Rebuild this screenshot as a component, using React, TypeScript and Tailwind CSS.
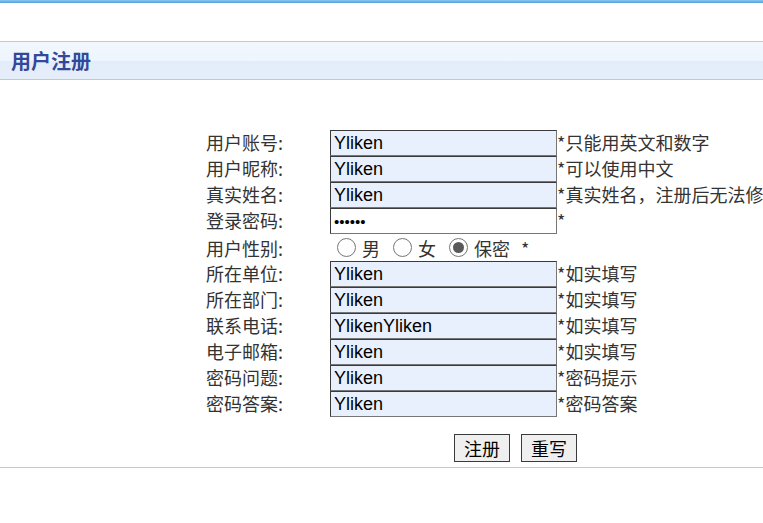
import React from "react";

const cjk = '"Noto Sans CJK SC", "Liberation Serif", serif';

const rows: { label: string; value: string; hint: string; password?: boolean }[] = [
  { label: "用户账号:", value: "Yliken", hint: "*只能用英文和数字" },
  { label: "用户昵称:", value: "Yliken", hint: "*可以使用中文" },
  { label: "真实姓名:", value: "Yliken", hint: "*真实姓名，注册后无法修" },
  { label: "登录密码:", value: "123456", hint: "*", password: true },
];

const rows2: { label: string; value: string; hint: string }[] = [
  { label: "所在单位:", value: "Yliken", hint: "*如实填写" },
  { label: "所在部门:", value: "Yliken", hint: "*如实填写" },
  { label: "联系电话:", value: "YlikenYliken", hint: "*如实填写" },
  { label: "电子邮箱:", value: "Yliken", hint: "*如实填写" },
  { label: "密码问题:", value: "Yliken", hint: "*密码提示" },
  { label: "密码答案:", value: "Yliken", hint: "*密码答案" },
];

function Row({ label, value, hint, password }: { label: string; value: string; hint: string; password?: boolean }) {
  return (
    <div className="flex h-[26px] items-center whitespace-nowrap">
      <div className="w-[124px] shrink-0 pb-[3px] text-[18px] leading-none text-[#333]" style={{ fontFamily: cjk }}>
        {label}
      </div>
      <input
        readOnly
        type={password ? "password" : "text"}
        defaultValue={value}
        className={
          "h-[26px] w-[227px] shrink-0 border border-t-[#3a3a3a] border-l-[#3a3a3a] border-r-[#767676] border-b-[#767676] pl-[3px] outline-none " +
          (password ? "bg-white text-[15px] text-black" : "bg-[#e8f0fe] text-[18px] text-black")
        }
        style={{ fontFamily: '"Liberation Sans", Arial, sans-serif' }}
      />
      <div className="pb-[3px] text-[18px] leading-none text-[#333]" style={{ fontFamily: cjk }}>
        {hint}
      </div>
    </div>
  );
}

function Radio({ checked, label }: { checked?: boolean; label: string }) {
  return (
    <div className="flex items-center">
      <span className="flex h-[19px] w-[19px] items-center justify-center rounded-full border border-[#767676] bg-white">
        {checked && <span className="h-[11px] w-[11px] rounded-full bg-[#5a5a5a]" />}
      </span>
      <span className="ml-[6px] text-[18px] leading-none text-[#333]" style={{ fontFamily: cjk }}>
        {label}
      </span>
    </div>
  );
}

export default function App() {
  return (
    <div className="relative h-[523px] w-[763px] overflow-hidden bg-white">
      <div className="h-[3px] bg-gradient-to-b from-[#8cc6f0] to-[#4f9fe0]" />
      <div className="mt-[38px] border-y border-[#b5cbe5]">
        <div className="flex h-[37px] items-center bg-[linear-gradient(to_bottom,#f2f7fd_0%,#eef5fd_50%,#e3edf9_52%,#e5eef9_100%)] pl-[11px]">
          <span className="text-[20px] font-bold leading-none text-[#34489a]" style={{ fontFamily: cjk }}>
            用户注册
          </span>
        </div>
      </div>

      <div className="pl-[206px] pt-[50px]">
        {rows.map((r) => (
          <Row key={r.label} {...r} />
        ))}
        <div className="flex h-[27px] items-center whitespace-nowrap">
          <div className="w-[131px] shrink-0 text-[18px] leading-none text-[#333]" style={{ fontFamily: cjk }}>
            用户性别:
          </div>
          <div className="flex items-center gap-[13px]">
            <Radio label="男" />
            <Radio label="女" />
            <Radio checked label="保密" />
          </div>
          <span className="ml-[11px] text-[18px] leading-none text-[#333]" style={{ fontFamily: cjk }}>
            *
          </span>
        </div>
        {rows2.map((r) => (
          <Row key={r.label} {...r} />
        ))}
      </div>

      <div className="mt-[17px] flex gap-[11px] pl-[454px]">
        <button className="h-[28px] w-[56px] border border-[#3a3a3a] bg-[#efefef] text-[18px] leading-none text-black" style={{ fontFamily: cjk }}>
          注册
        </button>
        <button className="h-[28px] w-[56px] border border-[#3a3a3a] bg-[#efefef] text-[18px] leading-none text-black" style={{ fontFamily: cjk }}>
          重写
        </button>
      </div>
      <div className="mt-[5px] h-px bg-[#b5cbe5]" />
    </div>
  );
}
